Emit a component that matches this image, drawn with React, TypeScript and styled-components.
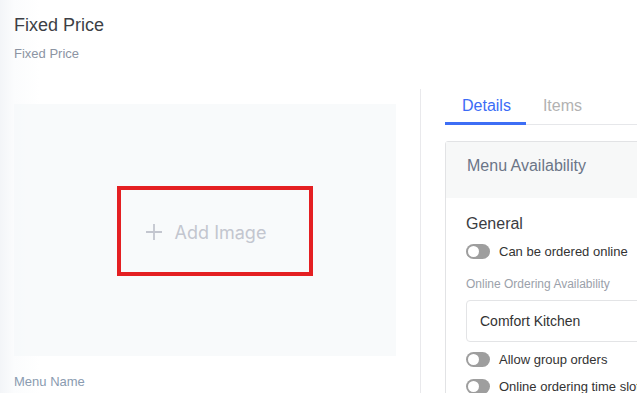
import styled, { createGlobalStyle } from 'styled-components';

const GlobalStyle = createGlobalStyle`
  html, body { margin: 0; padding: 0; background: #fff; }
  body { font-family: "Liberation Sans", Arial, sans-serif; }
  * { box-sizing: border-box; }
`;

const Page = styled.main`
  width: 637px;
  height: 393px;
  overflow: hidden;
  background: linear-gradient(90deg, #f3f5f8 0px, #fbfcfd 14px, #ffffff 40px);
`;

const Header = styled.header`
  padding: 13px 14px 0;
  height: 89px;
`;

const Title = styled.h1`
  margin: 0;
  font-size: 18px;
  line-height: 24px;
  font-weight: 400;
  color: #3d3f46;
`;

const Subtitle = styled.div`
  margin-top: 8px;
  font-size: 13px;
  line-height: 18px;
  color: #8c94a3;
`;

const Body = styled.div`
  display: flex;
  padding-left: 14px;
  height: 304px;
`;

const LeftColumn = styled.section`
  width: 382px;
  flex-shrink: 0;
  padding-top: 15px;
  margin-right: 24px;
`;

const ImageDrop = styled.div`
  height: 252px;
  background: rgba(246, 248, 250, 0.75);
  display: flex;
  align-items: center;
  justify-content: center;
`;

const Highlight = styled.div`
  width: 196px;
  height: 90px;
  margin-left: 20px;
  margin-top: 2px;
  border: 4px solid #e41f22;
  display: flex;
  align-items: center;
  justify-content: center;
  gap: 13px;
  padding-right: 18px;
  padding-top: 2px;
`;

const AddText = styled.span`
  font-family: Inter, "Liberation Sans", sans-serif;
  font-size: 18px;
  color: #c3c6cf;
`;

const FieldLabel = styled.div`
  margin-top: 17px;
  font-size: 13px;
  line-height: 18px;
  color: #8a9bb0;
`;

const Divider = styled.div`
  width: 1px;
  background: #e9e9ec;
  flex-shrink: 0;
`;

const RightColumn = styled.section`
  width: 420px;
  flex-shrink: 0;
  padding-left: 24px;
`;

const TabBar = styled.nav`
  display: flex;
  height: 36px;
  border-bottom: 1px solid #e6e7ea;
`;

const Tab = styled.div<{ $active?: boolean }>`
  height: 36px;
  padding: 0 15px 0 17px;
  display: flex;
  align-items: center;
  font-size: 16px;
  color: ${({ $active }) => ($active ? '#3b6cf6' : '#b2b2b2')};
  border-bottom: 3px solid ${({ $active }) => ($active ? '#3d6ef5' : 'transparent')};
  margin-bottom: -1px;
`;

const Card = styled.div`
  margin-top: 16px;
  border: 1px solid #e2e3e5;
  border-radius: 3px;
  background: #fff;
`;

const CardHeader = styled.div`
  height: 56px;
  background: #f7f8f8;
  padding: 14px 0 0 21px;
  font-size: 16px;
  line-height: 20px;
  color: #6b7587;
`;

const CardBody = styled.div`
  padding: 16px 20px;
`;

const SectionTitle = styled.div`
  font-size: 16px;
  line-height: 20px;
  color: #3a3c42;
`;

const ToggleRow = styled.label`
  display: flex;
  align-items: center;
  gap: 9px;
  height: 20px;
  margin-top: 7px;
  font-size: 13px;
  color: #333;
`;

const Toggle = styled.span`
  width: 24px;
  height: 15px;
  border-radius: 8px;
  background: #9e9e9e;
  position: relative;
  flex-shrink: 0;
  &::after {
    content: '';
    position: absolute;
    left: 2px;
    top: 2px;
    width: 11px;
    height: 11px;
    border-radius: 50%;
    background: #fff;
  }
`;

const SmallLabel = styled.div`
  margin-top: 15px;
  font-size: 12px;
  line-height: 16px;
  color: #9ba1aa;
`;

const Select = styled.div`
  margin-top: 8px;
  height: 42px;
  border: 1px solid #e3e4e6;
  border-radius: 4px;
  display: flex;
  align-items: center;
  padding-left: 13px;
  font-size: 14px;
  color: #333;
`;

function PlusIcon() {
  return (
    <svg width="16" height="16" viewBox="0 0 16 16" aria-hidden>
      <path d="M8 0v16M0 8h16" stroke="#c3c6cf" strokeWidth="1.8" fill="none" />
    </svg>
  );
}

export default function App() {
  return (
    <>
      <GlobalStyle />
      <Page>
        <Header>
          <Title>Fixed Price</Title>
          <Subtitle>Fixed Price</Subtitle>
        </Header>
        <Body>
          <LeftColumn>
            <ImageDrop>
              <Highlight>
                <PlusIcon />
                <AddText>Add Image</AddText>
              </Highlight>
            </ImageDrop>
            <FieldLabel>Menu Name</FieldLabel>
          </LeftColumn>
          <Divider />
          <RightColumn>
            <TabBar>
              <Tab $active>Details</Tab>
              <Tab>Items</Tab>
            </TabBar>
            <Card>
              <CardHeader>Menu Availability</CardHeader>
              <CardBody>
                <SectionTitle>General</SectionTitle>
                <ToggleRow><Toggle />Can be ordered online</ToggleRow>
                <SmallLabel>Online Ordering Availability</SmallLabel>
                <Select>Comfort Kitchen</Select>
                <ToggleRow><Toggle />Allow group orders</ToggleRow>
                <ToggleRow><Toggle />Online ordering time slot</ToggleRow>
              </CardBody>
            </Card>
          </RightColumn>
        </Body>
      </Page>
    </>
  );
}
